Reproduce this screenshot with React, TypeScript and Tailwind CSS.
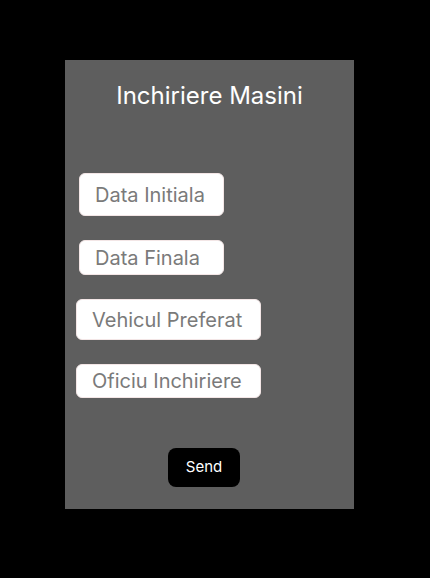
export default function App() {
  const font = { fontFamily: 'Inter, "Noto Sans", sans-serif' };

  return (
    <div className="w-[430px] h-[578px] bg-black overflow-hidden" style={font}>
      <div className="ml-[65px] mt-[60px] w-[289px] h-[449px] bg-[#5e5e5e] flex flex-col">
        <h1 className="mt-[21px] text-center text-white text-[24px] leading-[29px]">Inchiriere Masini</h1>

        <div className="mt-[63px] ml-[14px] w-[145px] h-[43px] bg-white rounded-[6px] border border-[#f3e6e6] flex items-center pl-[15px] text-[20px] text-[#7a7a7a]">
          Data Initiala
        </div>
        <div className="mt-[24px] ml-[14px] w-[145px] h-[35px] bg-white rounded-[6px] border border-[#f3e6e6] flex items-center pl-[15px] text-[20px] text-[#7a7a7a]">
          Data Finala
        </div>
        <div className="mt-[24px] ml-[11px] w-[185px] h-[41px] bg-white rounded-[6px] border border-[#f3e6e6] flex items-center pl-[15px] text-[20px] text-[#7a7a7a]">
          Vehicul Preferat
        </div>
        <div className="mt-[24px] ml-[11px] w-[185px] h-[34px] bg-white rounded-[6px] border border-[#f3e6e6] flex items-center pl-[15px] text-[20px] text-[#7a7a7a]">
          Oficiu Inchiriere
        </div>

        <button className="mt-[50px] ml-[103px] w-[72px] h-[39px] bg-black rounded-[8px] text-white text-[15px]">
          Send
        </button>
      </div>
    </div>
  );
}
